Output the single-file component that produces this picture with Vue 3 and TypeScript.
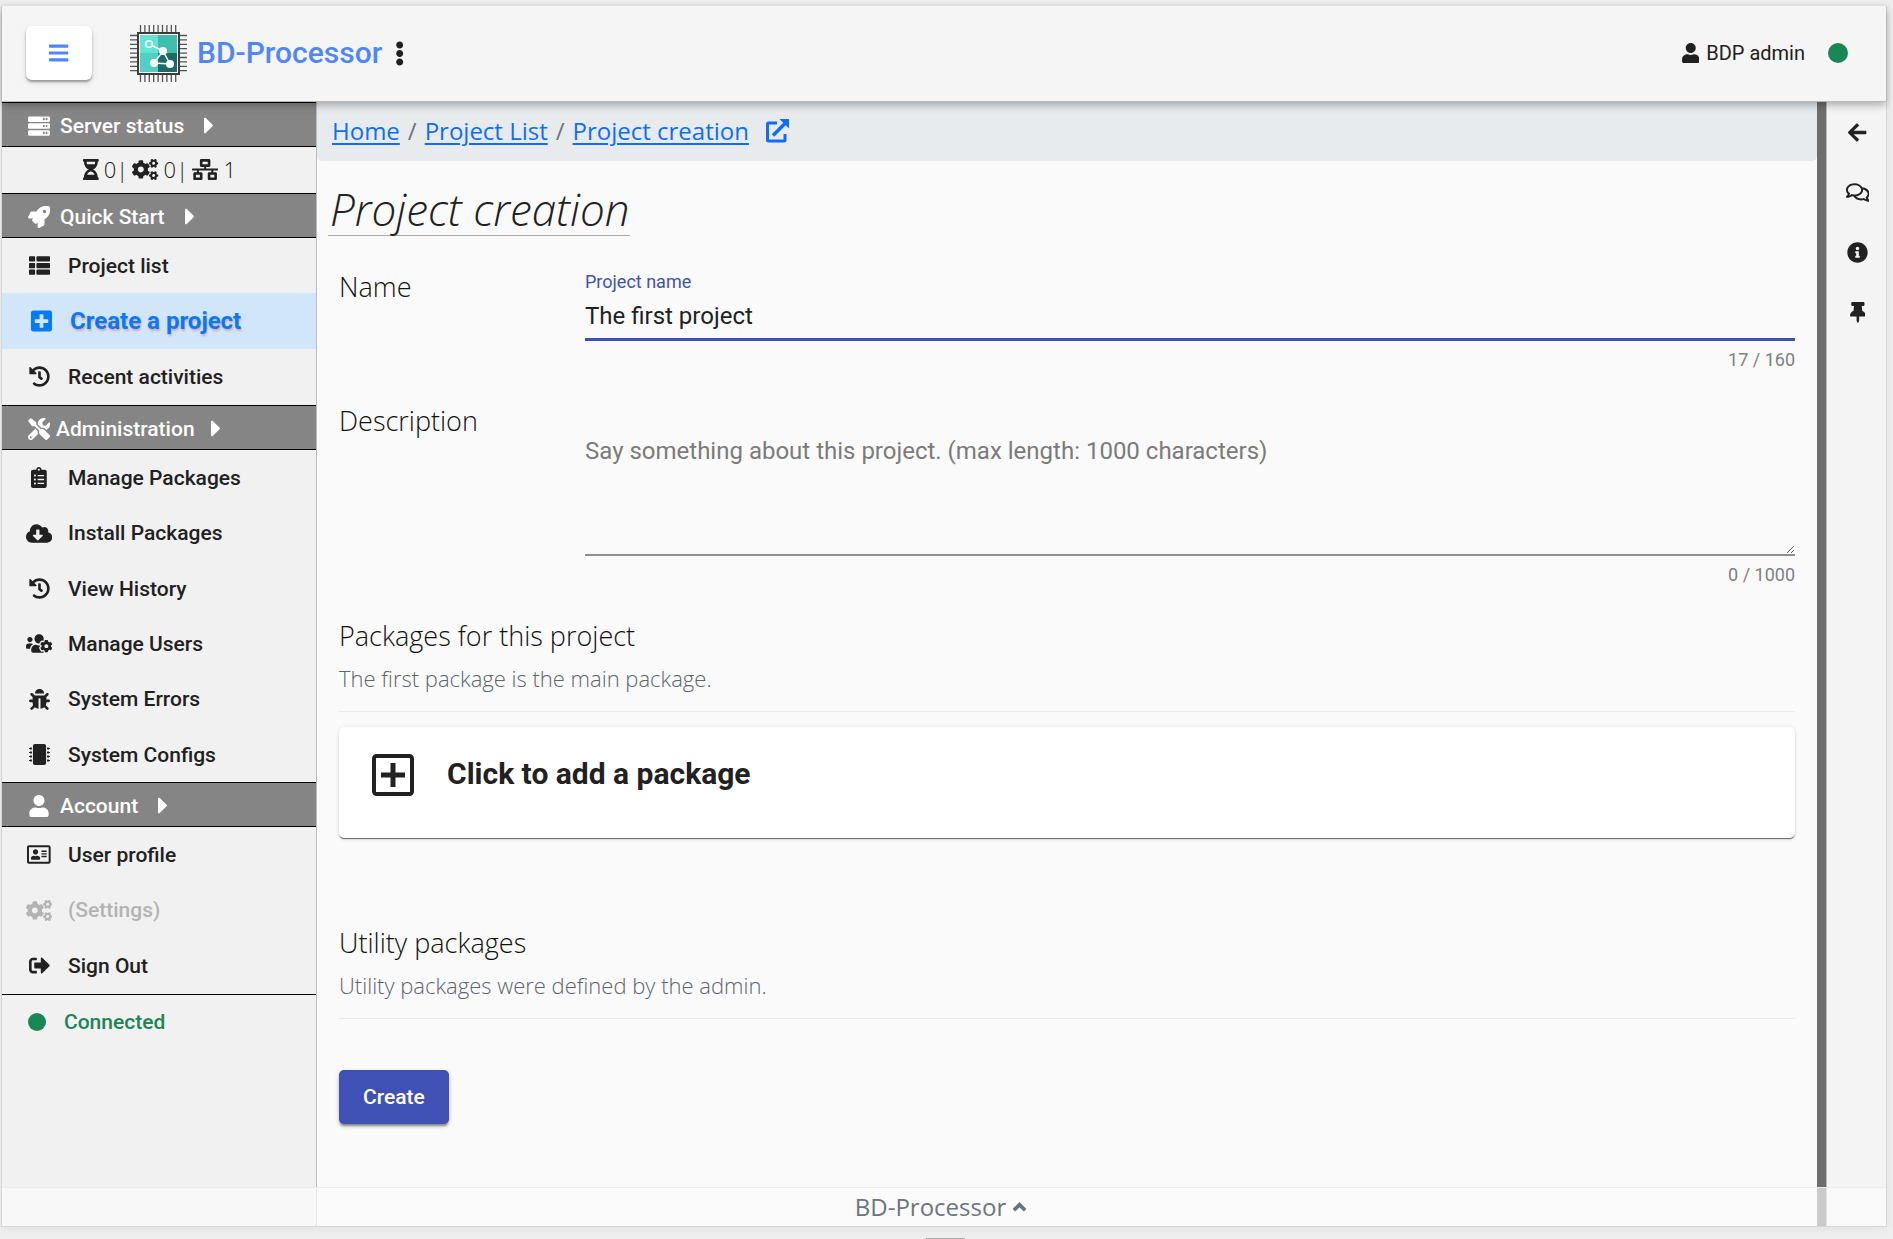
<script setup lang="ts">
import { computed, h, ref, type FunctionalComponent } from 'vue'

type IconDef = [width: number, path: string]

const pinRows = [88, 184, 280, 376]
const chipPins = pinRows
  .map(
    (y) =>
      `M0 ${y + 18}v12a6 6 0 0 0 6 6h18v6a6 6 0 0 0 6 6h42v-48H30a6 6 0 0 0-6 6v6H6a6 6 0 0 0-6 6z` +
      `M512 ${y + 18}v12a6 6 0 0 1-6 6h-18v6a6 6 0 0 1-6 6h-42v-48h42a6 6 0 0 1 6 6v6h18a6 6 0 0 1 6 6z`,
  )
  .join('')

const serverUnit = (y: number): string =>
  `M480 ${y + 128}H32c-17.7 0-32-14.3-32-32V${y + 32}c0-17.7 14.3-32 32-32h448c17.7 0 32 14.3 32 32v64c0 17.7-14.3 32-32 32z` +
  `m-48-88c-13.3 0-24 10.7-24 24s10.7 24 24 24 24-10.7 24-24-10.7-24-24-24z` +
  `m-64 0c-13.3 0-24 10.7-24 24s10.7 24 24 24 24-10.7 24-24-10.7-24-24-24z`

const listRow = (y: number): string =>
  `M24 ${y}h101.300c13.300 0 24 10.700 24 24v80c0 13.300-10.700 24-24 24H24c-13.300 0-24-10.700-24-24v-80c0-13.300 10.700-24 24-24z` +
  `M205.300 ${y}H488c13.300 0 24 10.700 24 24v80c0 13.300-10.700 24-24 24H205.300c-13.300 0-24-10.700-24-24v-80c0-13.300 10.700-24 24-24z`

const icons: Record<string, IconDef> = {
  bars: [448, 'M16 132h416c8.800 0 16-7.200 16-16V76c0-8.800-7.200-16-16-16H16C7.200 60 0 67.200 0 76v40c0 8.800 7.200 16 16 16zm0 160h416c8.800 0 16-7.200 16-16v-40c0-8.800-7.200-16-16-16H16c-8.800 0-16 7.200-16 16v40c0 8.800 7.200 16 16 16zm0 160h416c8.800 0 16-7.200 16-16v-40c0-8.800-7.200-16-16-16H16c-8.800 0-16 7.200-16 16v40c0 8.800 7.200 16 16 16z'],
  dots: [192, 'M96 184c39.800 0 72 32.200 72 72s-32.200 72-72 72-72-32.200-72-72 32.200-72 72-72zM24 80c0 39.800 32.200 72 72 72s72-32.200 72-72S135.800 8 96 8 24 40.200 24 80zm0 352c0 39.800 32.200 72 72 72s72-32.200 72-72-32.200-72-72-72-72 32.200-72 72z'],
  caret: [192, 'M0 384.700V127.300c0-17.800 21.500-26.700 34.100-14.100l128.700 128.700c7.800 7.800 7.800 20.500 0 28.300L34.100 398.800C21.500 411.400 0 402.500 0 384.700z'],
  user: [448, 'M224 256c70.700 0 128-57.300 128-128S294.700 0 224 0 96 57.300 96 128s57.300 128 128 128zm89.600 32h-16.700c-22.200 10.200-46.900 16-72.900 16s-50.600-5.800-72.900-16h-16.700C60.200 288 0 348.200 0 422.400V464c0 26.500 21.500 48 48 48h352c26.500 0 48-21.500 48-48v-41.600c0-74.200-60.200-134.400-134.400-134.400z'],
  server: [512, serverUnit(32) + serverUnit(192) + serverUnit(352)],
  hourglass: [384, 'M360 0H24C10.745 0 0 10.745 0 24v16c0 13.255 10.745 24 24 24 0 90.965 51.016 167.734 120.842 192C75.016 280.266 24 357.035 24 448c-13.255 0-24 10.745-24 24v16c0 13.255 10.745 24 24 24h336c13.255 0 24-10.745 24-24v-16c0-13.255-10.745-24-24-24 0-90.965-51.016-167.734-120.842-192C308.984 231.734 360 154.965 360 64c13.255 0 24-10.745 24-24V24c0-13.255-10.745-24-24-24zm-75.078 384H99.08c17.059-46.797 52.096-80 92.920-80 40.821 0 75.862 33.196 92.922 80zm.019-256H99.078C91.988 108.548 88 86.748 88 64h208c0 22.805-3.987 44.587-11.059 64z'],
  cogs: [640, 'M512.100 191l-8.200 14.300c-3 5.300-9.400 7.500-15.100 5.400-11.800-4.400-22.600-10.700-32.100-18.600-4.600-3.800-5.800-10.500-2.800-15.700l8.200-14.300c-6.900-8-12.300-17.300-15.900-27.400h-16.500c-6 0-11.200-4.300-12.200-10.300-2-12-2.100-24.600 0-37.100 1-6 6.200-10.400 12.200-10.400h16.500c3.600-10.100 9-19.400 15.900-27.400l-8.200-14.300c-3-5.200-1.900-11.900 2.800-15.700 9.500-7.900 20.400-14.200 32.100-18.600 5.700-2.100 12.100.1 15.100 5.400l8.200 14.300c10.500-1.900 21.200-1.900 31.700 0L552 6.300c3-5.300 9.400-7.500 15.100-5.400 11.800 4.400 22.600 10.700 32.100 18.600 4.600 3.800 5.800 10.500 2.800 15.700l-8.200 14.300c6.900 8 12.300 17.300 15.900 27.400h16.500c6 0 11.200 4.300 12.200 10.300 2 12 2.100 24.600 0 37.100-1 6-6.200 10.400-12.200 10.400h-16.500c-3.600 10.100-9 19.400-15.900 27.400l8.200 14.300c3 5.200 1.900 11.900-2.800 15.700-9.500 7.900-20.400 14.200-32.100 18.600-5.700 2.100-12.100-.1-15.100-5.400l-8.200-14.300c-10.400 1.900-21.200 1.900-31.700 0zm-10.500-58.800c38.500 29.600 82.400-14.300 52.800-52.800-38.500-29.700-82.400 14.300-52.800 52.800zM386.300 286.100l33.700 16.800c10.100 5.800 14.500 18.100 10.500 29.100-8.900 24.200-26.400 46.400-42.600 65.800-7.400 8.900-20.200 11.100-30.300 5.300l-29.100-16.800c-16 13.700-34.600 24.600-54.900 31.700v33.600c0 11.600-8.300 21.600-19.700 23.600-24.600 4.200-50.400 4.400-75.900 0-11.500-2-20-11.900-20-23.600V418c-20.300-7.200-38.900-18-54.900-31.700L74 403c-10 5.800-22.900 3.600-30.300-5.300-16.200-19.400-33.300-41.600-42.200-65.700-4-10.900.4-23.200 10.500-29.100l33.300-16.800c-3.900-20.900-3.900-42.400 0-63.400L12 205.800c-10.100-5.800-14.600-18.100-10.500-29 8.900-24.200 26-46.400 42.200-65.800 7.400-8.900 20.200-11.100 30.300-5.300l29.100 16.800c16-13.700 34.600-24.600 54.900-31.700V57.100c0-11.500 8.200-21.500 19.600-23.500 24.600-4.200 50.500-4.400 76-.1 11.500 2 20 11.900 20 23.600v33.600c20.300 7.200 38.900 18 54.900 31.700l29.100-16.800c10-5.800 22.900-3.600 30.300 5.300 16.200 19.400 33.200 41.600 42.100 65.800 4 10.900.1 23.200-10 29.100l-33.700 16.800c3.900 21 3.900 42.500 0 63.500zm-117.600 21.100c59.200-77-28.700-164.900-105.700-105.700-59.200 77 28.700 164.900 105.700 105.700zm243.400 182.700l-8.200 14.300c-3 5.300-9.400 7.500-15.100 5.400-11.800-4.400-22.600-10.700-32.100-18.600-4.600-3.800-5.800-10.500-2.800-15.700l8.200-14.300c-6.900-8-12.300-17.300-15.900-27.400h-16.500c-6 0-11.200-4.300-12.200-10.300-2-12-2.100-24.600 0-37.100 1-6 6.200-10.400 12.200-10.400h16.500c3.600-10.100 9-19.400 15.900-27.400l-8.200-14.300c-3-5.200-1.900-11.900 2.800-15.700 9.500-7.900 20.400-14.200 32.100-18.600 5.700-2.100 12.100.1 15.100 5.400l8.200 14.300c10.500-1.900 21.200-1.900 31.700 0l8.200-14.300c3-5.300 9.400-7.500 15.100-5.400 11.800 4.400 22.600 10.700 32.100 18.600 4.600 3.800 5.800 10.500 2.800 15.700l-8.200 14.300c6.900 8 12.300 17.300 15.900 27.400h16.500c6 0 11.200 4.300 12.200 10.300 2 12 2.100 24.600 0 37.100-1 6-6.200 10.400-12.200 10.400h-16.500c-3.600 10.100-9 19.400-15.900 27.400l8.200 14.300c3 5.200 1.900 11.900-2.800 15.700-9.500 7.900-20.400 14.200-32.100 18.600-5.700 2.100-12.100-.1-15.100-5.400l-8.200-14.300c-10.400 1.900-21.200 1.900-31.700 0zM501.600 431c38.500 29.600 82.400-14.300 52.800-52.800-38.500-29.600-82.400 14.300-52.800 52.800z'],
  network: [640, 'M640 264v-16c0-8.840-7.160-16-16-16H344v-40h72c17.670 0 32-14.330 32-32V32c0-17.670-14.330-32-32-32H224c-17.670 0-32 14.330-32 32v128c0 17.670 14.330 32 32 32h72v40H16c-8.840 0-16 7.160-16 16v16c0 8.840 7.160 16 16 16h104v40H64c-17.670 0-32 14.330-32 32v128c0 17.670 14.330 32 32 32h160c17.670 0 32-14.330 32-32V352c0-17.670-14.330-32-32-32h-56v-40h304v40h-56c-17.670 0-32 14.330-32 32v128c0 17.670 14.330 32 32 32h160c17.670 0 32-14.330 32-32V352c0-17.670-14.330-32-32-32h-56v-40h104c8.840 0 16-7.160 16-16zM256 128V64h128v64H256zm-64 320H96v-64h96v64zm352 0h-96v-64h96v64z'],
  rocket: [512, 'M505.120 19.094c-1.189-5.531-6.658-11-12.207-12.188C460.716 0 435.507 0 410.407 0 307.175 0 245.269 55.203 199.052 128H94.838c-16.348.016-35.557 11.875-42.887 26.484L2.516 253.297A28.400 28.400 0 0 0 0 264a24 24 0 0 0 24 24h103.816l-22.475 22.469c-11.365 11.361-12.996 32.258 0 45.250l50.905 50.906c11.156 11.188 32.156 13.156 45.277 0l22.475-22.469V488a24 24 0 0 0 24 24 28.560 28.560 0 0 0 10.707-2.516l98.728-49.390c14.629-7.297 26.508-26.500 26.508-42.860V312.797c72.598-46.313 128.035-108.406 128.035-211.094.1-25.203.1-50.406-6.856-82.609zM384 168a40 40 0 1 1 0-80 40 40 0 0 1 0 80z'],
  list: [512, listRow(32) + listRow(192) + listRow(352)],
  plus: [448, 'M400 32H48C21.500 32 0 53.500 0 80v352c0 26.500 21.500 48 48 48h352c26.500 0 48-21.500 48-48V80c0-26.500-21.500-48-48-48zm-32 252c0 6.600-5.400 12-12 12h-92v92c0 6.600-5.400 12-12 12h-56c-6.600 0-12-5.400-12-12v-92H92c-6.600 0-12-5.400-12-12v-56c0-6.600 5.400-12 12-12h92v-92c0-6.600 5.400-12 12-12h56c6.600 0 12 5.400 12 12v92h92c6.600 0 12 5.400 12 12v56z'],
  history: [512, 'M504 255.531c.253 136.640-111.180 248.372-247.820 248.468-59.015.042-113.223-20.530-155.822-54.911-11.077-8.940-11.905-25.541-1.839-35.607l11.267-11.267c8.609-8.609 22.353-9.551 31.891-1.984C173.062 425.135 212.781 440 256 440c101.705 0 184-82.311 184-184 0-101.705-82.311-184-184-184-48.814 0-93.149 18.969-126.068 49.932l50.754 50.754c10.080 10.080 2.941 27.314-11.313 27.314H24c-8.837 0-16-7.163-16-16V38.627c0-14.254 17.234-21.393 27.314-11.314l49.372 49.372C129.209 34.136 189.552 8 256 8c136.810 0 247.747 110.780 248 247.531zm-180.912 78.784l9.823-12.630c8.138-10.463 6.253-25.542-4.210-33.679L288 256.349V152c0-13.255-10.745-24-24-24h-16c-13.255 0-24 10.745-24 24v135.651l65.409 50.874c10.463 8.137 25.541 6.253 33.679-4.210z'],
  tools: [512, 'M501.100 395.700L384 278.600c-23.100-23.100-57.600-27.600-85.400-13.900L192 158.100V96L64 0 0 64l96 128h62.100l106.600 106.600c-13.600 27.800-9.200 62.300 13.900 85.400l117.100 117.100c14.600 14.600 38.200 14.600 52.700 0l52.700-52.700c14.500-14.600 14.500-38.200 0-52.700zM331.700 225c28.300 0 54.900 11 74.900 31l19.400 19.400c15.800-6.900 30.800-16.500 43.800-29.500 37.100-37.100 49.700-89.300 37.900-136.700-2.200-9-13.500-12.100-20.100-5.500l-74.400 74.400-67.900-11.300L334 98.900l74.400-74.400c6.600-6.600 3.400-17.900-5.700-20.200-47.400-11.700-99.600.9-136.600 37.900-28.500 28.500-41.900 66.100-41.200 103.600l82.100 82.100c8.100-1.900 16.500-2.900 24.700-2.900zm-103.900 82l-56.700-56.700L18.700 402.800c-25 25-25 65.500 0 90.500s65.500 25 90.500 0l123.600-123.600c-7.600-19.900-9.900-41.600-5-62.700zM64 472c-13.200 0-24-10.800-24-24 0-13.300 10.700-24 24-24s24 10.700 24 24c0 13.200-10.700 24-24 24z'],
  clipboard: [384, 'M336 64h-80c0-35.300-28.700-64-64-64s-64 28.700-64 64H48C21.500 64 0 85.500 0 112v352c0 26.500 21.500 48 48 48h288c26.500 0 48-21.500 48-48V112c0-26.500-21.500-48-48-48zM96 424c-13.300 0-24-10.700-24-24s10.700-24 24-24 24 10.700 24 24-10.700 24-24 24zm0-96c-13.300 0-24-10.700-24-24s10.700-24 24-24 24 10.700 24 24-10.700 24-24 24zm0-96c-13.300 0-24-10.700-24-24s10.700-24 24-24 24 10.700 24 24-10.700 24-24 24zm96-192c13.300 0 24 10.700 24 24s-10.700 24-24 24-24-10.700-24-24 10.700-24 24-24zm128 368c0 4.400-3.600 8-8 8H168c-4.400 0-8-3.600-8-8v-16c0-4.400 3.600-8 8-8h144c4.400 0 8 3.600 8 8v16zm0-96c0 4.400-3.600 8-8 8H168c-4.400 0-8-3.600-8-8v-16c0-4.400 3.600-8 8-8h144c4.400 0 8 3.600 8 8v16zm0-96c0 4.400-3.600 8-8 8H168c-4.400 0-8-3.600-8-8v-16c0-4.400 3.600-8 8-8h144c4.400 0 8 3.600 8 8v16z'],
  cloud: [640, 'M537.600 226.600c4.100-10.700 6.400-22.400 6.400-34.600 0-53-43-96-96-96-19.700 0-38.100 6-53.300 16.200C367 64.200 315.300 32 256 32c-88.400 0-160 71.600-160 160 0 2.700.1 5.400.2 8.100C40.200 219.800 0 273.200 0 336c0 79.500 64.500 144 144 144h368c70.700 0 128-57.300 128-128 0-61.900-44-113.600-102.400-125.400zm-132.900 88.700L299.300 420.700c-6.200 6.200-16.400 6.200-22.600 0L171.300 315.300c-10.100-10.100-2.900-27.300 11.300-27.300H248V176c0-8.800 7.200-16 16-16h48c8.800 0 16 7.200 16 16v112h65.400c14.200 0 21.400 17.200 11.300 27.300z'],
  users: [640, 'M610.500 341.300c2.600-14.100 2.600-28.500 0-42.600l25.800-14.900c3-1.700 4.300-5.200 3.300-8.500-6.700-21.600-18.200-41.200-33.200-57.400-2.300-2.500-6-3.100-9-1.400l-25.800 14.900c-10.900-9.300-23.400-16.500-36.900-21.300v-29.800c0-3.400-2.400-6.400-5.700-7.100-22.300-5-45-4.800-66.200 0-3.300.7-5.700 3.700-5.700 7.100v29.800c-13.500 4.800-26 12-36.900 21.300l-25.800-14.900c-2.900-1.700-6.700-1.100-9 1.400-15 16.200-26.500 35.800-33.200 57.400-1 3.300.4 6.800 3.300 8.500l25.800 14.900c-2.600 14.100-2.600 28.500 0 42.600l-25.800 14.900c-3 1.700-4.300 5.200-3.300 8.500 6.700 21.600 18.200 41.100 33.200 57.400 2.300 2.500 6 3.100 9 1.400l25.800-14.900c10.900 9.300 23.400 16.500 36.900 21.300v29.800c0 3.400 2.400 6.400 5.700 7.100 22.300 5 45 4.800 66.200 0 3.300-.7 5.700-3.700 5.700-7.100v-29.800c13.500-4.800 26-12 36.900-21.300l25.800 14.900c2.900 1.700 6.700 1.100 9-1.400 15-16.200 26.500-35.800 33.200-57.400 1-3.300-.4-6.800-3.300-8.500l-25.800-14.900zM496 368.500c-26.800 0-48.500-21.800-48.500-48.500s21.800-48.500 48.500-48.500 48.500 21.800 48.500 48.500-21.700 48.500-48.500 48.500zM96 224c35.300 0 64-28.700 64-64s-28.700-64-64-64-64 28.700-64 64 28.700 64 64 64zm224 32c1.900 0 3.700-.5 5.600-.6 8.300-21.700 20.500-42.100 36.300-59.200 7.400-8 17.900-12.600 28.900-12.600 6.900 0 13.700 1.800 19.600 5.300l7.900 4.600c.8-.5 1.600-.9 2.400-1.400 7-14.600 11.200-30.800 11.200-48 0-61.900-50.100-112-112-112S208 82.100 208 144c0 61.900 50.100 112 112 112zm105.200 194.500c-2.300-1.200-4.600-2.600-6.800-3.900-8.200 4.800-15.300 9.800-27.500 9.800-10.900 0-21.400-4.600-28.900-12.600-18.300-19.800-32.300-43.900-40.200-69.600-10.700-34.500 24.900-49.700 25.800-50.300-.1-2.600-.1-5.200 0-7.800l-7.900-4.600c-3.800-2.200-7-5-9.800-8.100-3.300.2-6.500.6-9.800.6-24.600 0-47.600-6-68.500-16h-8.300C179.600 288 128 339.600 128 403.200V432c0 26.500 21.500 48 48 48h255.400c-3.700-6-6.200-12.800-6.200-20.300v-9.200zM173.100 274.600C161.500 263.100 145.600 256 128 256H64c-35.300 0-64 28.700-64 64v32c0 17.700 14.300 32 32 32h65.900c6.300-47.400 34.900-87.300 75.200-109.400z'],
  bug: [512, 'M511.988 288.900c-.478 17.430-15.217 31.100-32.653 31.100H424v16c0 21.864-4.882 42.584-13.600 61.145l60.228 60.228c12.496 12.497 12.496 32.758 0 45.255-12.498 12.497-32.759 12.496-45.256 0l-54.736-54.736C345.886 467.965 314.351 480 280 480V236c0-6.627-5.373-12-12-12h-24c-6.627 0-12 5.373-12 12v244c-34.351 0-65.886-12.035-90.636-32.108l-54.736 54.736c-12.498 12.497-32.759 12.496-45.256 0-12.496-12.497-12.496-32.758 0-45.255l60.228-60.228C92.882 378.584 88 357.864 88 336v-16H32.666C15.230 320 .491 306.330.013 288.900-.484 270.816 13.818 256 31.800 256H88v-58.745l-46.628-46.628c-12.496-12.497-12.496-32.758 0-45.255 12.498-12.497 32.758-12.497 45.256 0L141.255 160h229.489l54.627-54.627c12.498-12.497 32.758-12.497 45.256 0 12.496 12.497 12.496 32.758 0 45.255L424 197.255V256h56.200c17.982 0 32.284 14.816 31.788 32.900zM257 0c-61.856 0-112 50.144-112 112h224C369 50.144 318.856 0 257 0z'],
  chip: [512, 'M416 48v416c0 26.510-21.490 48-48 48H144c-26.510 0-48-21.490-48-48V48c0-26.510 21.490-48 48-48h224c26.510 0 48 21.490 48 48z' + chipPins],
  card: [576, 'M528 32H48C21.500 32 0 53.500 0 80v352c0 26.500 21.500 48 48 48h480c26.500 0 48-21.500 48-48V80c0-26.500-21.500-48-48-48zm0 400H48V80h480v352zM208 256c35.300 0 64-28.700 64-64s-28.700-64-64-64-64 28.700-64 64 28.700 64 64 64zm-89.600 128h179.200c12.400 0 22.400-8.600 22.400-19.200v-19.200c0-31.800-30.100-57.600-67.200-57.600-10.800 0-18.700 8-44.800 8-26.900 0-33.400-8-44.800-8-37.100 0-67.200 25.800-67.200 57.600v19.200c0 10.600 10 19.200 22.400 19.200zM360 320h112c4.400 0 8-3.600 8-8v-16c0-4.400-3.600-8-8-8H360c-4.400 0-8 3.600-8 8v16c0 4.400 3.600 8 8 8zm0-64h112c4.400 0 8-3.600 8-8v-16c0-4.400-3.600-8-8-8H360c-4.400 0-8 3.600-8 8v16c0 4.400 3.600 8 8 8zm0-64h112c4.400 0 8-3.600 8-8v-16c0-4.400-3.600-8-8-8H360c-4.400 0-8 3.600-8 8v16c0 4.400 3.600 8 8 8z'],
  signout: [512, 'M497 273L329 441c-15 15-41 4.500-41-17v-96H152c-13.300 0-24-10.700-24-24v-96c0-13.300 10.700-24 24-24h136V88c0-21.400 25.900-32 41-17l168 168c9.300 9.400 9.300 24.600 0 34zM192 436v-40c0-6.600-5.400-12-12-12H96c-17.700 0-32-14.300-32-32V160c0-17.700 14.300-32 32-32h84c6.600 0 12-5.400 12-12V76c0-6.600-5.400-12-12-12H96c-53 0-96 43-96 96v192c0 53 43 96 96 96h84c6.600 0 12-5.400 12-12z'],
  back: [448, 'M257.500 445.100l-22.200 22.200c-9.400 9.400-24.600 9.400-33.900 0L7 273c-9.400-9.400-9.400-24.600 0-33.900L201.400 44.700c9.400-9.400 24.600-9.400 33.900 0l22.200 22.200c9.500 9.500 9.300 25-.4 34.300L136.600 216H424c13.300 0 24 10.700 24 24v32c0 13.300-10.700 24-24 24H136.600l120.500 114.800c9.800 9.300 10 24.800.4 34.300z'],
  comments: [576, 'M532 386.200c27.500-27.100 44-61.100 44-98.200 0-80-76.500-146.100-176.200-157.900C368.300 72.500 294.300 32 208 32 93.100 32 0 103.600 0 192c0 37 16.500 71 44 98.200-15.300 30.700-37.300 54.500-37.700 54.900-6.300 6.700-8.100 16.500-4.400 25 3.600 8.500 12 14 21.200 14 53.500 0 96.700-20.200 125.200-38.800 9.200 2.100 18.700 3.700 28.400 4.900C208.100 407.600 281.800 448 368 448c20.800 0 40.800-2.400 59.800-6.800C456.300 459.700 499.400 480 553 480c9.200 0 17.500-5.500 21.200-14 3.600-8.500 1.900-18.300-4.400-25-.4-.3-22.500-24.100-37.800-54.800zm-392.800-92.300L122.100 305c-14.100 9.100-28.500 16.300-43.100 21.400 2.700-4.700 5.400-9.700 8-14.800l15.500-31.100L77.700 256C64.200 242.600 48 220.700 48 192c0-60.700 73.300-112 160-112s160 51.300 160 112-73.300 112-160 112c-16.500 0-33-1.900-49-5.600l-19.800-4.500zM498.300 352l-24.700 24.400 15.500 31.100c2.600 5.100 5.300 10.100 8 14.800-14.600-5.100-29-12.300-43.100-21.400l-17.100-11.100-19.900 4.600c-16 3.700-32.500 5.600-49 5.600-54 0-102.200-20.100-131.300-49.700C338 339.500 416 272.900 416 192c0-3.400-.4-6.700-.7-10C479.700 196.500 528 238.800 528 288c0 28.700-16.200 50.600-29.700 64z'],
  info: [512, 'M256 8C119.043 8 8 119.083 8 256c0 136.997 111.043 248 248 248s248-111.003 248-248C504 119.083 392.957 8 256 8zm0 110c23.196 0 42 18.804 42 42s-18.804 42-42 42-42-18.804-42-42 18.804-42 42-42zm56 254c0 6.627-5.373 12-12 12h-88c-6.627 0-12-5.373-12-12v-24c0-6.627 5.373-12 12-12h12v-64h-12c-6.627 0-12-5.373-12-12v-24c0-6.627 5.373-12 12-12h64c6.627 0 12 5.373 12 12v100h12c6.627 0 12 5.373 12 12v24z'],
  pin: [384, 'M298.028 214.267L285.793 96H328c13.255 0 24-10.745 24-24V24c0-13.255-10.745-24-24-24H56C42.745 0 32 10.745 32 24v48c0 13.255 10.745 24 24 24h42.207L85.972 214.267C37.465 236.820 0 277.261 0 328c0 13.255 10.745 24 24 24h136v104.007c0 1.242.289 2.467.845 3.578l24 48c2.941 5.882 11.364 5.893 14.311 0l24-48a8.008 8.008 0 0 0 .845-3.578V352h136c13.255 0 24-10.745 24-24-.001-51.183-37.983-91.420-85.973-113.733z'],
}

const Icon: FunctionalComponent<{ name: string }> = (props) =>
  h(
    'svg',
    { viewBox: `0 0 ${icons[props.name][0]} 512`, fill: 'currentColor', 'aria-hidden': 'true' },
    [h('path', { d: icons[props.name][1] })],
  )
Icon.props = ['name']

interface MenuItem {
  icon: string
  label: string
  state?: 'active' | 'disabled'
}
interface MenuGroup {
  icon: string
  title: string
  tight?: boolean
  items: MenuItem[]
}

const groups: MenuGroup[] = [
  {
    icon: 'rocket',
    title: 'Quick Start',
    items: [
      { icon: 'list', label: 'Project list' },
      { icon: 'plus', label: 'Create a project', state: 'active' },
      { icon: 'history', label: 'Recent activities' },
    ],
  },
  {
    icon: 'tools',
    title: 'Administration',
    tight: true,
    items: [
      { icon: 'clipboard', label: 'Manage Packages' },
      { icon: 'cloud', label: 'Install Packages' },
      { icon: 'history', label: 'View History' },
      { icon: 'users', label: 'Manage Users' },
      { icon: 'bug', label: 'System Errors' },
      { icon: 'chip', label: 'System Configs' },
    ],
  },
  {
    icon: 'user',
    title: 'Account',
    items: [
      { icon: 'card', label: 'User profile' },
      { icon: 'cogs', label: '(Settings)', state: 'disabled' },
      { icon: 'signout', label: 'Sign Out' },
    ],
  },
]

const rail = [
  { icon: 'back', label: 'Back' },
  { icon: 'comments', label: 'Comments' },
  { icon: 'info', label: 'Information' },
  { icon: 'pin', label: 'Pin' },
]

const legs = [0, 1, 2, 3, 4, 5, 6, 7, 8]
const projectName = ref('The first project')
const description = ref('')
const descriptionHint = computed(() => `${description.value.length} / 1000`)
</script>

<template>
  <div class="page">
    <div class="frame">
      <header class="topbar">
        <button class="menu-btn" type="button" aria-label="Toggle menu"><Icon name="bars" class="ic-menu" /></button>
        <svg class="logo" viewBox="0 0 57 57" aria-hidden="true">
          <g stroke="#555" stroke-width="1.300">
            <template v-for="i in legs" :key="i">
              <path :d="`M${10.500 + i * 4.400} 0V57`" />
              <path :d="`M0 ${10.500 + i * 4.400}H57`" />
            </template>
          </g>
          <rect x="8" y="8" width="41" height="41" fill="#fff" stroke="#3c3c3c" stroke-width="2" />
          <path fill="#65e3d2" d="M10 10h18v18H10z" />
          <path fill="#3dbfae" d="M28 10h19v18H28z" />
          <path fill="#4fd0c2" d="M10 28h18v19H10z" />
          <path fill="#1d6b66" d="M28 28h19v19H28z" />
          <g stroke="#fff" stroke-width="1.500" fill="none">
            <circle cx="19" cy="19" r="3.300" />
            <path d="M22 20.500L33 26M33 26L24 38M33 26L40 39M24 38L40 39" />
          </g>
          <g fill="#fff"><circle cx="33" cy="26" r="4" /><circle cx="24" cy="38" r="4" /><circle cx="40" cy="39" r="4" /></g>
        </svg>
        <span class="brand">BD-Processor</span>
        <Icon name="dots" class="ic-dots" />
        <span class="who"><Icon name="user" class="ic-who" />BDP admin</span>
        <span class="dot dot-lg"></span>
      </header>

      <div class="body">
        <nav class="sidebar">
          <h2 class="group"><Icon name="server" class="ic-group" /><span>Server status</span><Icon name="caret" class="ic-caret" /></h2>
          <div class="status">
            <Icon name="hourglass" class="ic-status" /><span>0</span><span class="bar">|</span>
            <Icon name="cogs" class="ic-status" /><span>0</span><span class="bar">|</span>
            <Icon name="network" class="ic-status" /><span>1</span>
          </div>
          <template v-for="g in groups" :key="g.title">
            <h2 class="group" :class="{ tight: g.tight }">
              <Icon :name="g.icon" class="ic-group" /><span>{{ g.title }}</span><Icon name="caret" class="ic-caret" />
            </h2>
            <ul class="menu">
              <li v-for="m in g.items" :key="m.label">
                <a href="#" class="item" :class="m.state">
                  <span class="slot"><Icon :name="m.icon" class="ic-item" /></span>{{ m.label }}
                </a>
              </li>
            </ul>
          </template>
          <div class="connected"><span class="dot"></span>Connected</div>
        </nav>

        <main class="main">
          <nav class="crumbs" aria-label="Breadcrumb">
            <a href="#">Home</a><span>/</span><a href="#">Project List</a><span>/</span><a href="#">Project creation</a>
            <a href="#" class="ext" aria-label="Open in new window">
              <svg viewBox="0 0 24 24" fill="none" stroke="currentColor" stroke-width="3" aria-hidden="true">
                <path d="M12 4H3.500a1 1 0 0 0-1 1v16a1 1 0 0 0 1 1H19a1 1 0 0 0 1-1v-6" />
                <path d="M8 16.500L20 4.500" stroke-width="3.500" />
                <path d="M14.500 0H24v9.500z" fill="currentColor" stroke="none" />
              </svg>
            </a>
          </nav>
          <h1 class="title">Project creation</h1>

          <form class="form" @submit.prevent>
            <div class="row">
              <label class="lead" for="pname">Name</label>
              <div class="field">
                <label class="float" for="pname">Project name</label>
                <input id="pname" v-model="projectName" class="text" type="text" maxlength="160" />
                <div class="hint">17 / 160</div>
              </div>
            </div>
            <div class="row">
              <label class="lead" for="pdesc">Description</label>
              <div class="field area">
                <textarea id="pdesc" v-model="description" class="text" maxlength="1000" placeholder="Say something about this project. (max length: 1000 characters)"></textarea>
                <div class="hint">{{ descriptionHint }}</div>
              </div>
            </div>

            <section class="section">
              <h3 class="lead">Packages for this project</h3>
              <p>The first package is the main package.</p>
              <hr />
              <button class="add" type="button">
                <svg viewBox="0 0 42 42" fill="none" stroke="currentColor" aria-hidden="true">
                  <rect x="2" y="2" width="38" height="38" rx="2.500" stroke-width="4" />
                  <path d="M21 9v24M9 21h24" stroke-width="5" />
                </svg>
                <span>Click to add a package</span>
              </button>
            </section>
            <section class="section">
              <h3 class="lead">Utility packages</h3>
              <p>Utility packages were defined by the admin.</p>
              <hr />
            </section>
            <button class="create" type="submit">Create</button>
          </form>
        </main>
        <div class="scroll"></div>
        <aside class="rail">
          <button v-for="r in rail" :key="r.icon" type="button" :aria-label="r.label"><Icon :name="r.icon" class="ic-rail" /></button>
        </aside>
        <footer class="footer">
          BD-Processor
          <svg viewBox="0 0 16 10" fill="none" stroke="currentColor" stroke-width="4" aria-hidden="true"><path d="M2 8.500l6-6 6 6" /></svg>
        </footer>
      </div>
    </div>
    <div class="grip"></div>
  </div>
</template>

<style>
body {
  margin: 0;
  background: #efefef;
}
</style>

<style scoped>
.page,
.page * {
  box-sizing: border-box;
}
.page {
  position: relative;
  display: flex;
  flex-direction: column;
  min-height: 100vh;
  padding: 6px 6px 12px 1px;
  background: #efefef;
  color: #212121;
  font-family: Roboto, "Liberation Sans", sans-serif;
  font-size: 20px;
  overflow: hidden;
}
.frame {
  flex: 1;
  display: flex;
  flex-direction: column;
  border: 1px solid #d6d6d6;
  border-top: 0;
  box-shadow: 0 2px 12px rgba(0, 0, 0, 0.06);
}
svg {
  display: block;
  flex: none;
}
button {
  font: inherit;
  color: inherit;
  border: 0;
  margin: 0;
}

.topbar {
  position: relative;
  z-index: 2;
  display: flex;
  align-items: center;
  height: 96px;
  padding: 0 38px 1px 24px;
  background: #f5f5f5;
  border-bottom: 1px solid #b8b8b8;
  box-shadow: 0 3px 8px rgba(0, 0, 0, 0.3);
}
.menu-btn {
  display: flex;
  align-items: center;
  justify-content: center;
  width: 66px;
  height: 54px;
  border-radius: 6px;
  background: #fff;
  color: #4f87fb;
  box-shadow: 0 2px 2px rgba(0, 0, 0, 0.3), 0 3px 6px rgba(0, 0, 0, 0.12);
}
.ic-menu {
  height: 22px;
}
.logo {
  width: 57px;
  height: 57px;
  margin-left: 38px;
}
.brand {
  margin-left: 10px;
  font-size: 30px;
  font-weight: 500;
  line-height: 36px;
  color: #4f87fb;
}
.ic-dots {
  height: 25px;
  margin-left: 13px;
}
.who {
  display: flex;
  align-items: center;
  gap: 7px;
  margin-left: auto;
}
.ic-who {
  height: 20px;
}
.dot {
  width: 18px;
  height: 18px;
  border-radius: 50%;
  background: #198754;
}
.dot-lg {
  width: 20px;
  height: 20px;
  margin-left: 23px;
}

.body {
  position: relative;
  flex: 1;
  display: flex;
}
.sidebar {
  width: 315px;
  flex: none;
  background: #f1f1f1;
  border-right: 1px solid #bbb;
}
.group {
  display: flex;
  align-items: center;
  height: 45px;
  margin: 0;
  padding: 2px 0 0 26px;
  border: solid #000;
  border-width: 1px 0;
  background: #858585;
  color: #fff;
  font-size: 21px;
  font-weight: 500;
}
.group span {
  margin-left: 10px;
}
.group.tight span {
  margin-left: 6px;
}
.ic-group {
  width: 22px;
  height: 22px;
}
.ic-caret {
  height: 27px;
  margin-left: 20px;
}
.group.tight .ic-caret {
  margin-left: 16px;
}
.status {
  display: flex;
  align-items: center;
  height: 46px;
  padding: 0 0 2px 77px;
  font-family: "Open Sans", "Noto Sans", sans-serif;
  font-size: 22px;
  font-weight: 300;
}
.bar {
  width: 12px;
  text-align: center;
}
.ic-status {
  height: 21px;
  margin: 0 5px 0 4px;
}
.menu {
  list-style: none;
  min-height: 167px;
  margin: 0;
  padding: 0;
}
.item {
  display: flex;
  align-items: center;
  height: 55px;
  padding-left: 24px;
  color: #212121;
  font-size: 21px;
  font-weight: 500;
  text-decoration: none;
}
.menu li:nth-child(3n + 2) .item {
  height: 56px;
}
.slot {
  display: flex;
  justify-content: center;
  width: 26px;
  margin-right: 16px;
}
.ic-item {
  height: 21px;
}
.item.active {
  padding-left: 26px;
  background: #d2e6f9;
  color: #007bff;
  font-size: 24px;
  font-weight: 700;
  text-shadow: 1px 2px 2px rgba(220, 80, 80, 0.4);
}
.item.active .ic-item {
  height: 24px;
}
.item.disabled {
  color: #b3b3b3;
}
.connected {
  display: flex;
  align-items: center;
  gap: 18px;
  height: 55px;
  padding-left: 26px;
  border-top: 1px solid #000;
  color: #198754;
  font-size: 21px;
  font-weight: 500;
}

.main {
  flex: 1;
  min-width: 0;
  padding-bottom: 80px;
  background: #fafafa;
}
.crumbs,
.title,
.section,
.footer,
.lead {
  font-family: "Open Sans", "Noto Sans", sans-serif;
}
.crumbs {
  display: flex;
  align-items: center;
  gap: 8px;
  height: 59px;
  padding: 0 0 2px 15px;
  border-radius: 0 0 5px 5px;
  background: #e8ebee;
  color: #6c757d;
  font-size: 24px;
}
.crumbs a {
  color: #0d6efd;
  text-decoration: underline;
  text-decoration-thickness: 2px;
  text-underline-offset: 3px;
}
.ext svg {
  width: 24px;
  height: 24px;
  margin-left: 8px;
}
.title {
  width: max-content;
  height: 59px;
  margin: 16px 0 0 11px;
  padding: 0 0 0 2px;
  border-bottom: 1px solid #aaa;
  font-size: 44px;
  line-height: 64px;
  font-style: italic;
  font-weight: 300;
}
.form {
  padding: 32px 22px 0;
}
.row {
  display: grid;
  grid-template-columns: 246px 1fr;
  margin-bottom: 31px;
}
.lead {
  margin: 0;
  font-size: 27px;
  line-height: 38px;
  font-weight: 300;
  color: #111;
}
.field {
  display: flex;
  flex-direction: column;
}
.float {
  color: #3f51b5;
  font-size: 18px;
  line-height: 27px;
}
.text {
  display: block;
  width: 100%;
  margin: 0;
  padding: 0;
  border: 0;
  outline: 0;
  background: transparent;
  color: #212121;
  font: 24px/30px Roboto, "Liberation Sans", sans-serif;
}
input.text {
  height: 46px;
  padding-bottom: 2px;
  border-bottom: 3px solid #3f51b5;
}
.area {
  padding-top: 34px;
}
textarea.text {
  height: 120px;
  border-bottom: 2px solid #8e8e8e;
}
textarea.text::placeholder {
  color: #7b7b7b;
}
.hint {
  margin-top: 8px;
  color: #808080;
  font-size: 18px;
  line-height: 22px;
  text-align: right;
}
.section p {
  margin: 8px 0 18px;
  color: #5c656d;
  font-size: 22px;
  line-height: 30px;
  font-weight: 300;
}
.section hr {
  height: 1px;
  margin: 0;
  border: 0;
  background: #ebebeb;
}
.add {
  display: flex;
  width: 100%;
  height: 111px;
  margin: 15px 0 86px;
  padding: 27px 33px;
  gap: 33px;
  border-radius: 5px;
  background: #fff;
  box-shadow: 0 2px 1px -1px rgba(0, 0, 0, 0.4), 0 1px 1px rgba(0, 0, 0, 0.25), 0 1px 4px rgba(0, 0, 0, 0.12);
  font-family: Roboto, "Liberation Sans", sans-serif;
  font-size: 30px;
  line-height: 40px;
  font-weight: 700;
}
.add svg {
  width: 42px;
  height: 42px;
}
.create {
  display: block;
  height: 54px;
  margin-top: 51px;
  padding: 0 24px;
  border-radius: 5px;
  background: #3f51b5;
  color: #fff;
  font-size: 21px;
  font-weight: 500;
  box-shadow: 0 3px 2px -1px rgba(0, 0, 0, 0.3), 0 2px 4px rgba(0, 0, 0, 0.25);
}
.scroll {
  width: 9px;
  flex: none;
  background: #6e6e6e;
}
.rail {
  display: flex;
  flex-direction: column;
  width: 60px;
  flex: none;
  padding-left: 2px;
  border-left: 1px solid #bbb;
  background: #f4f4f4;
}
.rail button {
  display: flex;
  align-items: center;
  justify-content: center;
  height: 60px;
  padding: 0;
  background: none;
}
.ic-rail {
  height: 21px;
}
.footer {
  position: absolute;
  left: 0;
  right: 0;
  bottom: 0;
  display: flex;
  align-items: center;
  justify-content: center;
  gap: 6px;
  height: 39px;
  padding-right: 6px;
  border-top: 1px solid #ededed;
  background: rgba(252, 252, 252, 0.65);
  color: #6c757d;
  font-size: 24px;
  line-height: 38px;
}
.footer svg {
  width: 15px;
  height: 10px;
}
.grip {
  position: absolute;
  left: 50%;
  bottom: 0;
  width: 39px;
  height: 1px;
  margin-left: -21px;
  background: #a8a8a8;
}
</style>
